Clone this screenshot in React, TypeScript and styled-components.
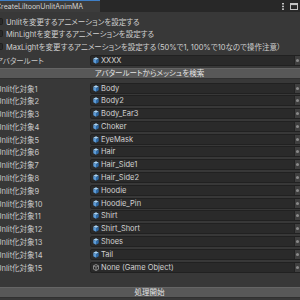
import React from "react";
import styled, { createGlobalStyle } from "styled-components";

const GlobalStyle = createGlobalStyle`
  html, body {
    margin: 0;
    padding: 0;
    background: #383838;
  }
  body {
    width: 300px;
    height: 300px;
    overflow: hidden;
    font-family: Inter, "Noto Sans CJK JP", sans-serif;
  }
`;

const Window = styled.div`
  width: 312px;
  height: 300px;
  margin-left: -5px;
  display: flex;
  flex-direction: column;
  background: #383838;
  color: #c8c8c8;
  font-size: 7.5px;
  font-feature-settings: "palt";
`;

const TabBar = styled.div`
  height: 12px;
  flex: none;
  display: flex;
  align-items: stretch;
  background: #282828;
  padding-right: 9px;
`;

const Tab = styled.div`
  width: 105px;
  box-sizing: border-box;
  background: #3c3c3c;
  border-top: 1px solid #3f7fc6;
  padding-left: 1px;
  font-size: 7px;
  line-height: 11px;
  color: #d2d2d2;
  white-space: nowrap;
  overflow: hidden;
`;

const TabTools = styled.div`
  margin-left: auto;
  display: flex;
  align-items: center;
  gap: 6px;
`;

const Content = styled.div`
  flex: 1;
  display: flex;
  flex-direction: column;
  padding: 3px 4px 2px 1px;
`;

const CheckRow = styled.div`
  height: 12.5px;
  display: flex;
  align-items: center;
  gap: 3px;
  white-space: nowrap;
  color: #d0d0d0;
`;

const CheckBox = styled.span`
  width: 7px;
  height: 7px;
  flex: none;
  box-sizing: border-box;
  background: #2a2a2a;
  border: 1px solid #1f1f1f;
  border-radius: 1.5px;
`;

const FieldRow = styled.div<{ $top?: number }>`
  height: 11px;
  margin-top: ${(p) => p.$top ?? 0}px;
  display: flex;
  align-items: center;
  white-space: nowrap;
`;

const Label = styled.div`
  width: 94px;
  flex: none;
  overflow: hidden;
`;

const Field = styled.div`
  flex: 1;
  height: 11px;
  box-sizing: border-box;
  display: flex;
  align-items: center;
  gap: 2px;
  padding-left: 2px;
  background: #2a2a2a;
  border: 1px solid #212121;
  border-radius: 2px;
  color: #d2d2d2;
  overflow: hidden;
`;

const FieldText = styled.span`
  flex: 1;
`;

const Picker = styled.span`
  width: 6px;
  align-self: stretch;
  background: #3f3f3f;
  border-left: 1px solid #232323;
  display: flex;
  align-items: center;
  padding-left: 1px;
  &::before {
    content: "";
    width: 3px;
    height: 3px;
    border-radius: 50%;
    background: #8a8a8a;
  }
`;

const Button = styled.div<{ $top?: number }>`
  height: 11px;
  margin-top: ${(p) => p.$top ?? 0}px;
  flex: none;
  box-sizing: border-box;
  background: #585858;
  border: 1px solid #303030;
  border-top-color: #656565;
  border-radius: 2px;
  color: #e4e4e4;
  line-height: 9px;
  text-align: center;
  white-space: nowrap;
`;

const List = styled.div`
  margin-top: 4px;
  display: flex;
  flex-direction: column;
  gap: 1.8px;
`;

const Bottom = styled(Button)`
  margin-top: auto;
`;

const CubeIcon = ({ none }: { none?: boolean }) =>
  none ? (
    <svg width="6" height="7" viewBox="0 0 6 7">
      <path d="M3 0.5 L5.5 1.8 V5.2 L3 6.5 L0.5 5.2 V1.8 Z M0.5 1.8 L3 3.1 L5.5 1.8 M3 3.1 V6.5" fill="none" stroke="#a0a0a0" strokeWidth="0.8" />
    </svg>
  ) : (
    <svg width="6" height="7" viewBox="0 0 6 7">
      <path d="M3 0.3 L5.7 1.7 L3 3.1 L0.3 1.7 Z" fill="#a9d3f5" />
      <path d="M0.3 1.7 L3 3.1 V6.7 L0.3 5.3 Z" fill="#5d9bd6" />
      <path d="M5.7 1.7 L3 3.1 V6.7 L5.7 5.3 Z" fill="#2f6aa6" />
    </svg>
  );

const Kebab = () => (
  <svg width="2" height="7" viewBox="0 0 2 7">
    <rect x="0" y="0" width="2" height="1.5" fill="#c4c4c4" />
    <rect x="0" y="2.7" width="2" height="1.5" fill="#c4c4c4" />
    <rect x="0" y="5.4" width="2" height="1.5" fill="#c4c4c4" />
  </svg>
);

const MaxIcon = () => (
  <svg width="8" height="7" viewBox="0 0 8 7">
    <rect x="0.5" y="0.5" width="7" height="6" fill="none" stroke="#c4c4c4" strokeWidth="1" />
    <rect x="0.5" y="0.5" width="7" height="1.6" fill="#c4c4c4" />
  </svg>
);

const targets = [
  "Body",
  "Body2",
  "Body_Ear3",
  "Choker",
  "EyeMask",
  "Hair",
  "Hair_Side1",
  "Hair_Side2",
  "Hoodie",
  "Hoodie_Pin",
  "Shirt",
  "Shirt_Short",
  "Shoes",
  "Tail",
  null,
];

const checks = [
  "Unlitを変更するアニメーションを設定する",
  "MinLightを変更するアニメーションを設定する",
  "MaxLightを変更するアニメーションを設定する（50%で1, 100%で10なので操作注意）",
];

export default function App() {
  return (
    <>
      <GlobalStyle />
      <Window>
        <TabBar>
          <Tab>CreateLiltoonUnlitAnimMA</Tab>
          <TabTools>
            <Kebab />
            <MaxIcon />
          </TabTools>
        </TabBar>
        <Content>
          {checks.map((c) => (
            <CheckRow key={c}>
              <CheckBox />
              {c}
            </CheckRow>
          ))}
          <FieldRow $top={2}>
            <Label>アバタールート</Label>
            <Field>
              <CubeIcon />
              <FieldText>XXXX</FieldText>
              <Picker />
            </Field>
          </FieldRow>
          <Button $top={2}>アバタールートからメッシュを検索</Button>
          <List>
            {targets.map((t, i) => (
              <FieldRow key={i}>
                <Label>Unlit化対象{i + 1}</Label>
                <Field>
                  <CubeIcon none={t === null} />
                  <FieldText>{t ?? "None (Game Object)"}</FieldText>
                  <Picker />
                </Field>
              </FieldRow>
            ))}
          </List>
          <Bottom>処理開始</Bottom>
        </Content>
      </Window>
    </>
  );
}
